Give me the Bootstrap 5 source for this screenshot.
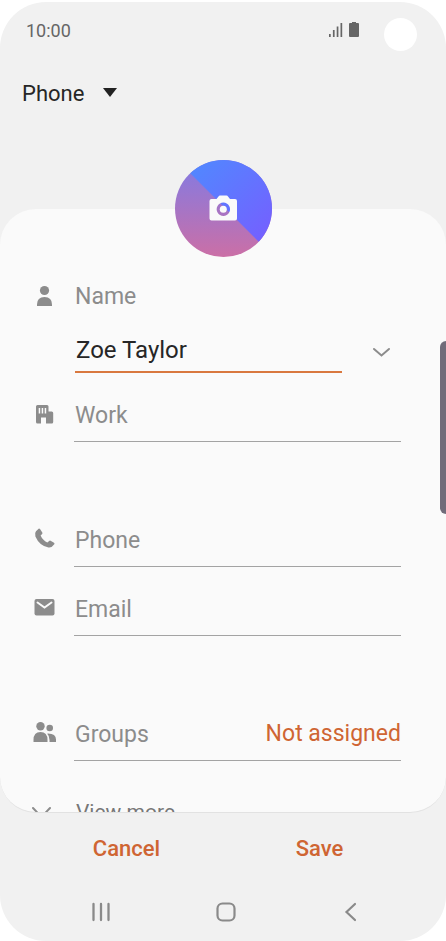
<!DOCTYPE html>
<html lang="en">
<head>
<meta charset="utf-8">
<meta name="viewport" content="width=device-width, initial-scale=1">
<title>Zoe Taylor</title>
<link href="https://cdn.jsdelivr.net/npm/bootstrap@5.3.0/dist/css/bootstrap.min.css" rel="stylesheet">
<style>
  :root { --ink: #262626; --muted: #8c8c8c; --accent: #cf6533; }
  body { font-family: Roboto, "Liberation Sans", sans-serif; background: #fff; padding-top: 2px; }
  .screen { height: calc(100vh - 2px); background: #f1f1f1; border-radius: 46px; }
  .status { height: 61px; padding: 0 29px 5px 26px; font-size: 18px; color: #666; }
  .status svg { margin-bottom: 2px; }
  .lens { width: 33px; height: 33px; margin: 9px 0 0 25px; }
  .storage { height: 60px; padding: 1px 0 0 22px; }
  .storage select {
    appearance: none; border: 0; color: var(--ink); font-size: 22px; line-height: 40px; height: 40px; padding: 0 33px 0 0;
    background: transparent url("data:image/svg+xml,%3Csvg xmlns='http://www.w3.org/2000/svg' viewBox='0 0 14 9'%3E%3Cpath d='M0 0h14L7 9z' fill='%23222'/%3E%3C/svg%3E") right 1px top 14px / 14px 9px no-repeat;
  }
  .avatar { width: 97px; height: 97px; margin: 37px auto -48px; z-index: 1; }
  .sheet { flex: 1 1 0; min-height: 0; background: #fafafa; border-radius: 36px; border-bottom: 1px solid #e2e2e2; }
  .sheet form { padding: 70px 45px 0 33px; }
  .entry { gap: 19px; }
  .entry > svg { width: 24px; height: 24px; flex: none; margin-right: -2px; margin-bottom: 4px; color: var(--muted); overflow: visible; }
  .slot { font-size: 23px; line-height: 36px; color: var(--muted); padding-left: 1px; }
  .line { height: 52px; border-bottom: 1px solid #a3a3a3; }
  .line input, .named input { border: 0; padding: 0 0 0 1px; background: transparent; font-size: 23px; color: var(--ink); outline: 0; }
  .line input::placeholder { color: var(--muted); opacity: 1; }
  .named { margin: 10px 0 0 42px; gap: 27px; }
  .named input { height: 48px; border-bottom: 2px solid #d9783f; padding: 3px 0 0 1px; font-size: 24px; }
  .named button { width: 32px; }
  .near { margin-top: 17px; }
  .apart { margin-top: 73px; }
  .more { margin-top: 33px; }
  .bare { border: 0; padding: 0; background: transparent; color: var(--muted); }
  .more .slot { font-size: 21px; padding-left: 2px; color: #777; }
  .accent { color: var(--accent); font-size: 23px; }
  .actions { height: 70px; padding: 0 30px; }
  .actions button { font-size: 22px; font-weight: 500; }
  .keys { height: 58px; padding: 0 33px 2px 39px; }
  .edge { right: 0; top: 339px; width: 6px; height: 173px; background: #716c7a; border-radius: 6px 0 0 6px; }
</style>
<script src="https://cdn.jsdelivr.net/npm/bootstrap@5.3.0/dist/js/bootstrap.bundle.min.js"></script>
</head>
<body>
<div class="screen d-flex flex-column position-relative overflow-hidden">
  <div class="status d-flex align-items-center justify-content-between">
    <span>10:00</span>
    <div class="d-flex align-items-center">
      <svg width="30" height="16" viewBox="0 0 30 16" fill="#666" aria-hidden="true">
        <path d="M0 13h1.700v3H0zM3.900 9h1.700v7H3.900zM7.700 5.500h1.700V16H7.700zM11.500 2h1.700v14h-1.700z"/>
        <path d="M21 2h2V1h4v1h2q1 0 1 1v12q0 1-1 1h-8q-1 0-1-1V3q0-1 1-1z"/>
      </svg>
      <span class="lens bg-white rounded-circle"></span>
    </div>
  </div>
  <div class="storage d-flex align-items-center">
    <select aria-label="Save to"><option>Phone</option></select>
  </div>
  <button class="avatar bare position-relative rounded-circle overflow-hidden flex-shrink-0" aria-label="Add photo">
    <svg class="d-block" width="97" height="97" viewBox="0 0 97 97">
      <defs>
        <linearGradient id="warm" x1="0" y1="0" x2="0" y2="1"><stop offset=".15" stop-color="#8b79dc"/><stop offset="1" stop-color="#cb6fa6"/></linearGradient>
        <linearGradient id="cool" x1="0" y1="0" x2="1" y2="1"><stop offset=".1" stop-color="#5089ff"/><stop offset=".9" stop-color="#755fff"/></linearGradient>
      </defs>
      <path fill="url(#warm)" d="M0 0h97v97H0z"/>
      <path fill="url(#cool)" d="M0 0V-2L97 95V0z"/>
      <path fill="#fafafa" fill-rule="evenodd" d="M36.500 39h5l2-2.500q.500-1 1.500-1h6.500q1 0 1.500 1l2 2.500h5q2 0 2 2v17.500q0 2-2 2H36.500q-2 0-2-2V41q0-2 2-2zM48.300 42.500a6.700 6.700 0 1 0 .1 0z"/>
      <circle cx="48.300" cy="49.200" r="3.500" fill="#fafafa"/>
    </svg>
  </button>

  <main class="sheet overflow-hidden">
    <form>
      <div class="entry d-flex align-items-center">
        <svg viewBox="0 0 24 24" fill="currentColor" aria-hidden="true"><circle cx="11.500" cy="7.500" r="4.600"/><path d="M4 23v-1.500q0-7.500 7.500-7.500t7.500 7.500V23z"/></svg>
        <label class="slot" for="name">Name</label>
      </div>
      <div class="named d-flex align-items-center">
        <input id="name" class="flex-grow-1 w-100 rounded-0" type="text" value="Zoe Taylor">
        <button type="button" class="bare flex-shrink-0" aria-label="Expand name">
          <svg class="d-block" width="32" height="20" viewBox="0 0 32 20" fill="none" stroke="#8c8c8c" stroke-width="2" stroke-linecap="round"><path d="M5 10l7.500 6.500L20 10"/></svg>
        </button>
      </div>

      <div class="entry near d-flex align-items-center">
        <svg viewBox="0 0 24 24" aria-hidden="true"><path fill="currentColor" fill-rule="evenodd" d="M4.500 3h9.500q1.500 0 1.500 1.500V9.500h3.200q1.500 0 1.500 1.500v9q0 1.500-1.500 1.500H13v-6H8v6H4.500Q3 21.500 3 20V4.500Q3 3 4.500 3zM5.700 6v5.500h1.500V6zm3 0v5.500h1.500V6zm3 0v5.500h1.500V6z"/></svg>
        <div class="line flex-grow-1 d-flex align-items-center">
          <input class="w-100 h-100" type="text" placeholder="Work" aria-label="Work">
        </div>
      </div>

      <div class="entry apart d-flex align-items-center">
        <svg viewBox="0 0 24 24" fill="currentColor" aria-hidden="true"><path d="M3 4.200L5.600 1.700q.8-.5 1.400.3l2.300 3.500q.5.900-.2 1.500L7.600 8.500q2 4.700 6.700 7l1.900-1.600q.6-.5 1.400-.1l3.400 2q.9.600.3 1.500-2.300 3.500-5.800 3.100Q6.500 19 2.400 9.500 1.300 6 3 4.200z"/></svg>
        <div class="line flex-grow-1 d-flex align-items-center">
          <input class="w-100 h-100" type="tel" placeholder="Phone" aria-label="Phone">
        </div>
      </div>

      <div class="entry near d-flex align-items-center">
        <svg viewBox="0 0 24 24" aria-hidden="true"><rect x="1.500" y="3" width="20" height="16.500" rx="2" fill="currentColor"/><path d="M4.500 6.500l7 5 7-5" fill="none" stroke="#fafafa" stroke-width="2" stroke-linecap="round"/></svg>
        <div class="line flex-grow-1 d-flex align-items-center">
          <input class="w-100 h-100" type="email" placeholder="Email" aria-label="Email">
        </div>
      </div>

      <div class="entry apart d-flex align-items-center">
        <svg viewBox="0 0 24 24" fill="currentColor" aria-hidden="true"><circle cx="7.500" cy="5.200" r="4.200"/><circle cx="16.700" cy="7" r="3.300"/><path d="M.500 21v-2q0-8 7-8t7 8v2zM15 12.500q8 .2 8 6V21h-6.500v-2q0-4.300-2.300-6.300z"/></svg>
        <div class="line flex-grow-1 d-flex align-items-center justify-content-between">
          <label class="slot" for="groups">Groups</label><button id="groups" type="button" class="bare accent">Not assigned</button>
        </div>
      </div>

      <div class="entry more d-flex align-items-center">
        <svg viewBox="0 0 24 24" fill="none" stroke="currentColor" stroke-width="2" stroke-linecap="round" aria-hidden="true"><path d="M0 10l8.500 9 8.500-9"/></svg>
        <button type="button" class="bare slot">View more</button>
      </div>
    </form>
  </main>

  <div class="actions d-flex align-items-center">
    <div class="flex-fill w-50 text-center"><button type="button" class="bare accent">Cancel</button></div>
    <div class="flex-fill w-50 text-center"><button type="button" class="bare accent">Save</button></div>
  </div>
  <nav class="keys d-flex align-items-center" aria-label="System">
    <button type="button" class="bare w-100" aria-label="Recent apps"><svg width="20" height="20" viewBox="0 0 20 20" stroke="#8a8a8a" stroke-width="2.300" stroke-linecap="round"><path d="M2.500 2v16M10 2v16M17.500 2v16"/></svg></button>
    <button type="button" class="bare w-100" aria-label="Home"><svg width="20" height="20" viewBox="0 0 20 20" fill="none" stroke="#8a8a8a" stroke-width="2.200"><rect x="1.500" y="1.500" width="17" height="17" rx="5"/></svg></button>
    <button type="button" class="bare w-100" aria-label="Back"><svg width="20" height="20" viewBox="0 0 20 20" fill="none" stroke="#8a8a8a" stroke-width="2.200" stroke-linecap="round"><path d="M14 2L5.500 10l8.500 8"/></svg></button>
  </nav>
  <div class="edge position-absolute"></div>
</div>
</body>
</html>
